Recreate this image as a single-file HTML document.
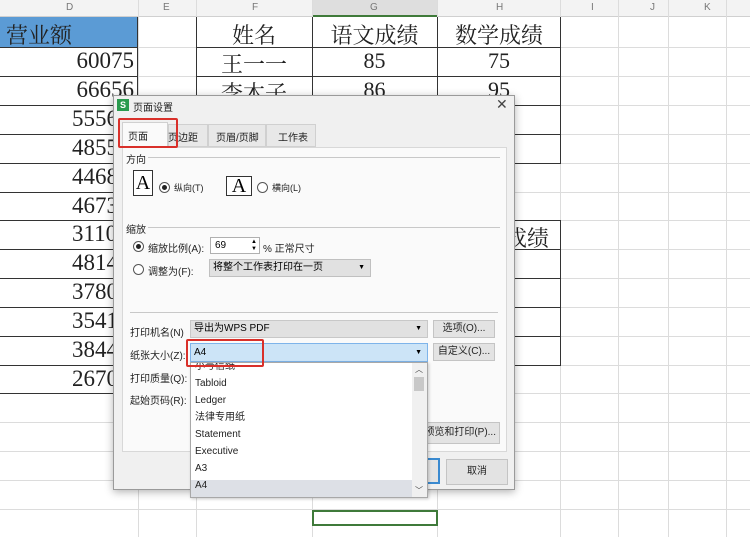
<!DOCTYPE html>
<html><head><meta charset="utf-8"><style>
*{margin:0;padding:0;box-sizing:border-box}
body{width:750px;height:537px;overflow:hidden;background:#fff;position:relative;font-family:"Liberation Sans","Noto Sans CJK SC",sans-serif;}
.a{position:absolute;white-space:nowrap}
.ser{font-family:"Liberation Serif","Noto Serif CJK SC",serif;color:#222}
.hl{position:absolute;height:1px;background:#dcdcdc}
.vl{position:absolute;width:1px;background:#dcdcdc}
.bk{background:#333}
.s{font-size:10px;color:#222}
.btn{position:absolute;white-space:nowrap;background:#e3e3e3;border:1px solid #c4c4c4;font-size:10px;text-align:center;color:#222}
.radio{position:absolute;width:11px;height:11px;border:1px solid #555;border-radius:50%;background:#fff}
.radio.on::after{content:"";position:absolute;left:2px;top:2px;width:5px;height:5px;border-radius:50%;background:#222}
.num{position:absolute;font-size:23px;text-align:right}
</style></head><body>
<div class="a" style="left:0;top:0;width:750px;height:17px;background:#f3f3f3;border-bottom:1px solid #d0d0d0"></div>
<div class="a" style="left:312px;top:0;width:125px;height:17px;background:#dedede;border-bottom:2px solid #3f7a3a"></div>
<div class="a s" style="top:2px;left:66px;color:#777">D</div>
<div class="a s" style="top:2px;left:163px;color:#777">E</div>
<div class="a s" style="top:2px;left:252px;color:#777">F</div>
<div class="a s" style="top:2px;left:370px;color:#777">G</div>
<div class="a s" style="top:2px;left:496px;color:#777">H</div>
<div class="a s" style="top:2px;left:591px;color:#777">I</div>
<div class="a s" style="top:2px;left:650px;color:#777">J</div>
<div class="a s" style="top:2px;left:704px;color:#777">K</div>
<div class="vl" style="left:138px;top:0;height:537px"></div>
<div class="vl" style="left:196px;top:0;height:537px"></div>
<div class="vl" style="left:312px;top:0;height:537px"></div>
<div class="vl" style="left:437px;top:0;height:537px"></div>
<div class="vl" style="left:560px;top:0;height:537px"></div>
<div class="vl" style="left:618px;top:0;height:537px"></div>
<div class="vl" style="left:668px;top:0;height:537px"></div>
<div class="vl" style="left:726px;top:0;height:537px"></div>
<div class="hl" style="left:0;width:750px;top:47px"></div>
<div class="hl" style="left:0;width:750px;top:76px"></div>
<div class="hl" style="left:0;width:750px;top:105px"></div>
<div class="hl" style="left:0;width:750px;top:134px"></div>
<div class="hl" style="left:0;width:750px;top:163px"></div>
<div class="hl" style="left:0;width:750px;top:192px"></div>
<div class="hl" style="left:0;width:750px;top:220px"></div>
<div class="hl" style="left:0;width:750px;top:249px"></div>
<div class="hl" style="left:0;width:750px;top:278px"></div>
<div class="hl" style="left:0;width:750px;top:307px"></div>
<div class="hl" style="left:0;width:750px;top:336px"></div>
<div class="hl" style="left:0;width:750px;top:365px"></div>
<div class="hl" style="left:0;width:750px;top:393px"></div>
<div class="hl" style="left:0;width:750px;top:422px"></div>
<div class="hl" style="left:0;width:750px;top:451px"></div>
<div class="hl" style="left:0;width:750px;top:480px"></div>
<div class="hl" style="left:0;width:750px;top:509px"></div>
<div class="a" style="left:0;top:17px;width:138px;height:30px;background:#5b9bd5"></div>
<div class="a ser" style="left:6px;top:19px;font-size:22px">营业额</div>
<div class="a" style="left:0;top:17px;width:138px;height:377px;border-right:1px solid #333"></div>
<div class="a bk" style="left:0;top:47px;width:138px;height:1px"></div>
<div class="a bk" style="left:0;top:76px;width:138px;height:1px"></div>
<div class="a bk" style="left:0;top:105px;width:138px;height:1px"></div>
<div class="a bk" style="left:0;top:134px;width:138px;height:1px"></div>
<div class="a bk" style="left:0;top:163px;width:138px;height:1px"></div>
<div class="a bk" style="left:0;top:192px;width:138px;height:1px"></div>
<div class="a bk" style="left:0;top:220px;width:138px;height:1px"></div>
<div class="a bk" style="left:0;top:249px;width:138px;height:1px"></div>
<div class="a bk" style="left:0;top:278px;width:138px;height:1px"></div>
<div class="a bk" style="left:0;top:307px;width:138px;height:1px"></div>
<div class="a bk" style="left:0;top:336px;width:138px;height:1px"></div>
<div class="a bk" style="left:0;top:365px;width:138px;height:1px"></div>
<div class="a bk" style="left:0;top:393px;width:138px;height:1px"></div>
<div class="num ser" style="left:0;width:134px;top:48px">60075</div>
<div class="num ser" style="left:0;width:134px;top:77px">66656</div>
<div class="num ser" style="left:72px;top:106px">5556</div>
<div class="num ser" style="left:72px;top:135px">4855</div>
<div class="num ser" style="left:72px;top:164px">4468</div>
<div class="num ser" style="left:72px;top:193px">4673</div>
<div class="num ser" style="left:72px;top:221px">3110</div>
<div class="num ser" style="left:72px;top:250px">4814</div>
<div class="num ser" style="left:72px;top:279px">3780</div>
<div class="num ser" style="left:72px;top:308px">3541</div>
<div class="num ser" style="left:72px;top:337px">3844</div>
<div class="num ser" style="left:72px;top:366px">2670</div>
<div class="a" style="left:196px;top:17px;width:365px;height:147px;border:1px solid #333;border-top:none"></div>
<div class="a bk" style="left:312px;top:17px;width:1px;height:147px"></div>
<div class="a bk" style="left:437px;top:17px;width:1px;height:147px"></div>
<div class="a bk" style="left:196px;top:47px;width:365px;height:1px"></div>
<div class="a bk" style="left:196px;top:76px;width:365px;height:1px"></div>
<div class="a bk" style="left:196px;top:105px;width:365px;height:1px"></div>
<div class="a bk" style="left:196px;top:134px;width:365px;height:1px"></div>
<div class="a ser" style="left:196px;width:116px;top:19px;font-size:22px;text-align:center">姓名</div>
<div class="a ser" style="left:312px;width:125px;top:19px;font-size:22px;text-align:center">语文成绩</div>
<div class="a ser" style="left:437px;width:124px;top:19px;font-size:22px;text-align:center">数学成绩</div>
<div class="a ser" style="left:196px;width:116px;top:48px;font-size:22px;text-align:center">王一一</div>
<div class="a ser" style="left:312px;width:125px;top:48px;font-size:22px;text-align:center">85</div>
<div class="a ser" style="left:437px;width:124px;top:48px;font-size:22px;text-align:center">75</div>
<div class="a ser" style="left:196px;width:116px;top:77px;font-size:22px;text-align:center">李木子</div>
<div class="a ser" style="left:312px;width:125px;top:77px;font-size:22px;text-align:center">86</div>
<div class="a ser" style="left:437px;width:124px;top:77px;font-size:22px;text-align:center">95</div>
<div class="a" style="left:437px;top:220px;width:124px;height:146px;border:1px solid #333;border-left:none"></div>
<div class="a bk" style="left:437px;top:249px;width:124px;height:1px"></div>
<div class="a bk" style="left:437px;top:278px;width:124px;height:1px"></div>
<div class="a bk" style="left:437px;top:307px;width:124px;height:1px"></div>
<div class="a bk" style="left:437px;top:336px;width:124px;height:1px"></div>
<div class="a ser" style="left:505px;top:222px;font-size:22px">成绩</div>
<div class="a" style="left:312px;top:510px;width:126px;height:16px;border:2px solid #3f7a3a"></div>
<!-- dialog -->
<div class="a" style="left:113px;top:95px;width:402px;height:395px;background:#f0f0f0;border:1px solid #9a9a9a;box-shadow:0 2px 8px rgba(0,0,0,.3)"></div>
<div class="a" style="left:117px;top:99px;width:12px;height:12px;background:#2a9b4f;color:#fff;font-size:9px;font-weight:bold;text-align:center;line-height:12px">S</div>
<div class="a s" style="left:133px;top:99px">页面设置</div>
<div class="a" style="left:496px;top:96px;font-size:14px;color:#444">✕</div>
<div class="a" style="left:122px;top:122px;width:46px;height:26px;background:#fafafa;border:1px solid #d0d0d0;border-bottom:none"></div>
<div class="a s" style="left:128px;top:128px">页面</div>
<div class="a" style="left:168px;top:124px;width:40px;height:23px;background:#e8e8e8;border:1px solid #d0d0d0"></div>
<div class="a s" style="left:168px;top:129px">页边距</div>
<div class="a" style="left:208px;top:124px;width:58px;height:23px;background:#e8e8e8;border:1px solid #d0d0d0"></div>
<div class="a s" style="left:216px;top:129px">页眉/页脚</div>
<div class="a" style="left:266px;top:124px;width:50px;height:23px;background:#e8e8e8;border:1px solid #d0d0d0"></div>
<div class="a s" style="left:278px;top:129px">工作表</div>
<div class="a" style="left:122px;top:147px;width:385px;height:305px;background:#fafafa;border:1px solid #d8d8d8"></div>
<div class="a" style="left:118px;top:118px;width:60px;height:30px;border:2px solid #d9302a;border-radius:2px"></div>
<div class="a s" style="left:126px;top:151px">方向</div>
<div class="a" style="left:148px;top:157px;width:352px;height:1px;background:#c8c8c8"></div>
<div class="a" style="left:133px;top:170px;width:20px;height:26px;border:1px solid #333;background:#fff;font-family:'Liberation Serif',serif;font-size:20px;text-align:center;line-height:24px">A</div>
<div class="radio on" style="left:159px;top:182px"></div>
<div class="a s" style="left:174px;top:181px;font-size:9px">纵向(T)</div>
<div class="a" style="left:226px;top:176px;width:26px;height:20px;border:1px solid #333;background:#fff;font-family:'Liberation Serif',serif;font-size:20px;text-align:center;line-height:19px">A</div>
<div class="radio" style="left:257px;top:182px"></div>
<div class="a s" style="left:272px;top:181px;font-size:9px">横向(L)</div>
<div class="a s" style="left:126px;top:221px">缩放</div>
<div class="a" style="left:148px;top:227px;width:352px;height:1px;background:#c8c8c8"></div>
<div class="radio on" style="left:133px;top:241px"></div>
<div class="a s" style="left:148px;top:240px">缩放比例(A):</div>
<div class="a" style="left:210px;top:237px;width:50px;height:17px;background:#fff;border:1px solid #b0b0b0;font-size:10px;padding-left:4px;line-height:15px">69</div>
<div class="a" style="left:251px;top:239px;font-size:6px;line-height:7px">▲<br>▼</div>
<div class="a s" style="left:263px;top:240px">% 正常尺寸</div>
<div class="radio" style="left:133px;top:264px"></div>
<div class="a s" style="left:148px;top:263px">调整为(F):</div>
<div class="a" style="left:209px;top:259px;width:162px;height:18px;background:#e1e1e1;border:1px solid #c0c0c0;font-size:10px;padding-left:3px;line-height:16px">将整个工作表打印在一页<span style="position:absolute;right:5px;font-size:7px">▼</span></div>
<div class="a" style="left:130px;top:312px;width:368px;height:1px;background:#c8c8c8"></div>
<div class="a s" style="left:130px;top:324px">打印机名(N)</div>
<div class="a" style="left:190px;top:320px;width:238px;height:18px;background:#e1e1e1;border:1px solid #c8c8c8;font-size:10px;padding-left:3px;line-height:16px">导出为WPS PDF<span style="position:absolute;right:5px;font-size:7px">▼</span></div>
<div class="btn" style="left:433px;top:320px;width:62px;height:18px;line-height:16px">选项(O)...</div>
<div class="a s" style="left:130px;top:347px">纸张大小(Z):</div>
<div class="a" style="left:190px;top:343px;width:238px;height:19px;background:#cce4f7;border:1px solid #7eb4ea;font-size:10px;padding-left:3px;line-height:17px">A4<span style="position:absolute;right:5px;font-size:7px">▼</span></div>
<div class="btn" style="left:433px;top:343px;width:62px;height:18px;line-height:16px">自定义(C)...</div>
<div class="a s" style="left:130px;top:370px">打印质量(Q):</div>
<div class="a s" style="left:130px;top:392px">起始页码(R):</div>
<div class="btn" style="left:418px;top:422px;width:82px;height:22px;line-height:20px;text-align:right;padding-right:3px">预览和打印(P)...</div>
<div class="a" style="left:412px;top:458px;width:28px;height:26px;border:2px solid #3a8ad0;background:#e3e3e3"></div>
<div class="btn" style="left:446px;top:459px;width:62px;height:26px;line-height:24px">取消</div>
<div class="a" style="left:190px;top:362px;width:238px;height:136px;background:#fff;border:1px solid #a8a8a8;box-shadow:1px 1px 3px rgba(0,0,0,.2);overflow:hidden">
<div style="position:absolute;right:0;top:0;width:15px;height:134px;background:#f0f0f0"></div>
<div style="position:absolute;right:3px;top:14px;width:10px;height:14px;background:#c8c8c8"></div>
<div style="position:absolute;right:4px;top:1px;font-size:8px;color:#444">︿</div>
<div style="position:absolute;right:4px;bottom:1px;font-size:8px;color:#444">﹀</div>
<div style="position:absolute;left:0;top:117px;width:221px;height:17px;background:#dde0e6"></div>
<div style="position:absolute;left:4px;top:-5px;font-size:10px;line-height:17px;color:#222;white-space:nowrap">小号信纸<br>Tabloid<br>Ledger<br>法律专用纸<br>Statement<br>Executive<br>A3<br>A4</div>
</div>
<div class="a" style="left:186px;top:339px;width:78px;height:28px;border:2px solid #d9302a;border-radius:2px"></div>
</body></html>
